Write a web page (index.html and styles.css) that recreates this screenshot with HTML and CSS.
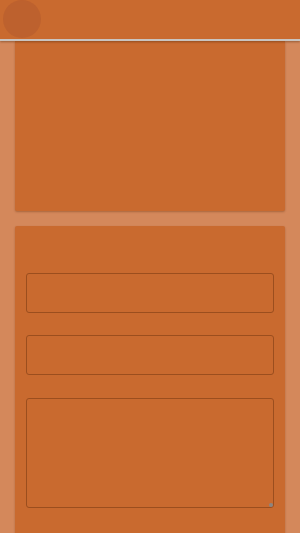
FILE: index.html
```html
<!DOCTYPE html>
<html lang="en">
<head>
    <meta charset="UTF-8">
    <meta name="viewport" content="width=device-width, initial-scale=1.0">
    <title>Panel</title>
    <link rel="stylesheet" href="styles.css">
</head>
<body>

    <header class="barra">
        <div class="avatar"></div>
    </header>

    <main class="contenido">

        <section class="tarjeta tarjeta_alta"></section>

        <section class="tarjeta formulario">
            <input class="campo" type="text">
            <input class="campo" type="text">
            <div class="caja_envoltura">
                <textarea class="campo caja_texto"></textarea>
                <span class="agarre"></span>
            </div>
        </section>

    </main>

</body>
</html>
```

FILE: styles.css
```css
* {
    box-sizing: border-box;
    font-family: "Liberation Sans", Arial, sans-serif;
}
html, body {
    margin: 0;
    height: 100%;
    background-color: #d4885b;
    overflow: hidden;
}
.barra {
    height: 41px;
    background-color: #c96a2f;
    border-bottom: 2px solid #c9c4c0;
    box-shadow: 0 1px 2px rgba(80, 40, 10, 0.45);
    padding: 0 0 0 3px;
    position: relative;
    z-index: 2;
}
.avatar {
    width: 38px;
    height: 38px;
    border-radius: 50%;
    background-color: #bd612e;
}
.contenido {
    padding: 0 15px;
    display: flex;
    flex-direction: column;
    gap: 15px;
}
.tarjeta {
    background-color: #c96a2f;
    border-radius: 2px;
    box-shadow: 0 1px 2px rgba(90, 40, 10, 0.35);
}
.tarjeta_alta {
    height: 170px;
    border-radius: 0 0 2px 2px;
}
.formulario {
    display: flex;
    flex-direction: column;
    padding: 47px 11px 30px;
    gap: 22px;
    min-height: 320px;
}
.campo {
    display: block;
    width: 100%;
    height: 40px;
    background-color: #c96a2f;
    border: 1px solid #9b4e1e;
    border-radius: 3px;
    margin: 0;
}
.caja_envoltura {
    position: relative;
    margin-top: 1px;
}
.caja_texto {
    height: 110px;
    resize: none;
}
/* puntito de redimensionar */
.agarre {
    position: absolute;
    right: 1px;
    bottom: 1px;
    width: 4px;
    height: 4px;
    border-radius: 50%;
    background-color: #8a8582;
}
```
